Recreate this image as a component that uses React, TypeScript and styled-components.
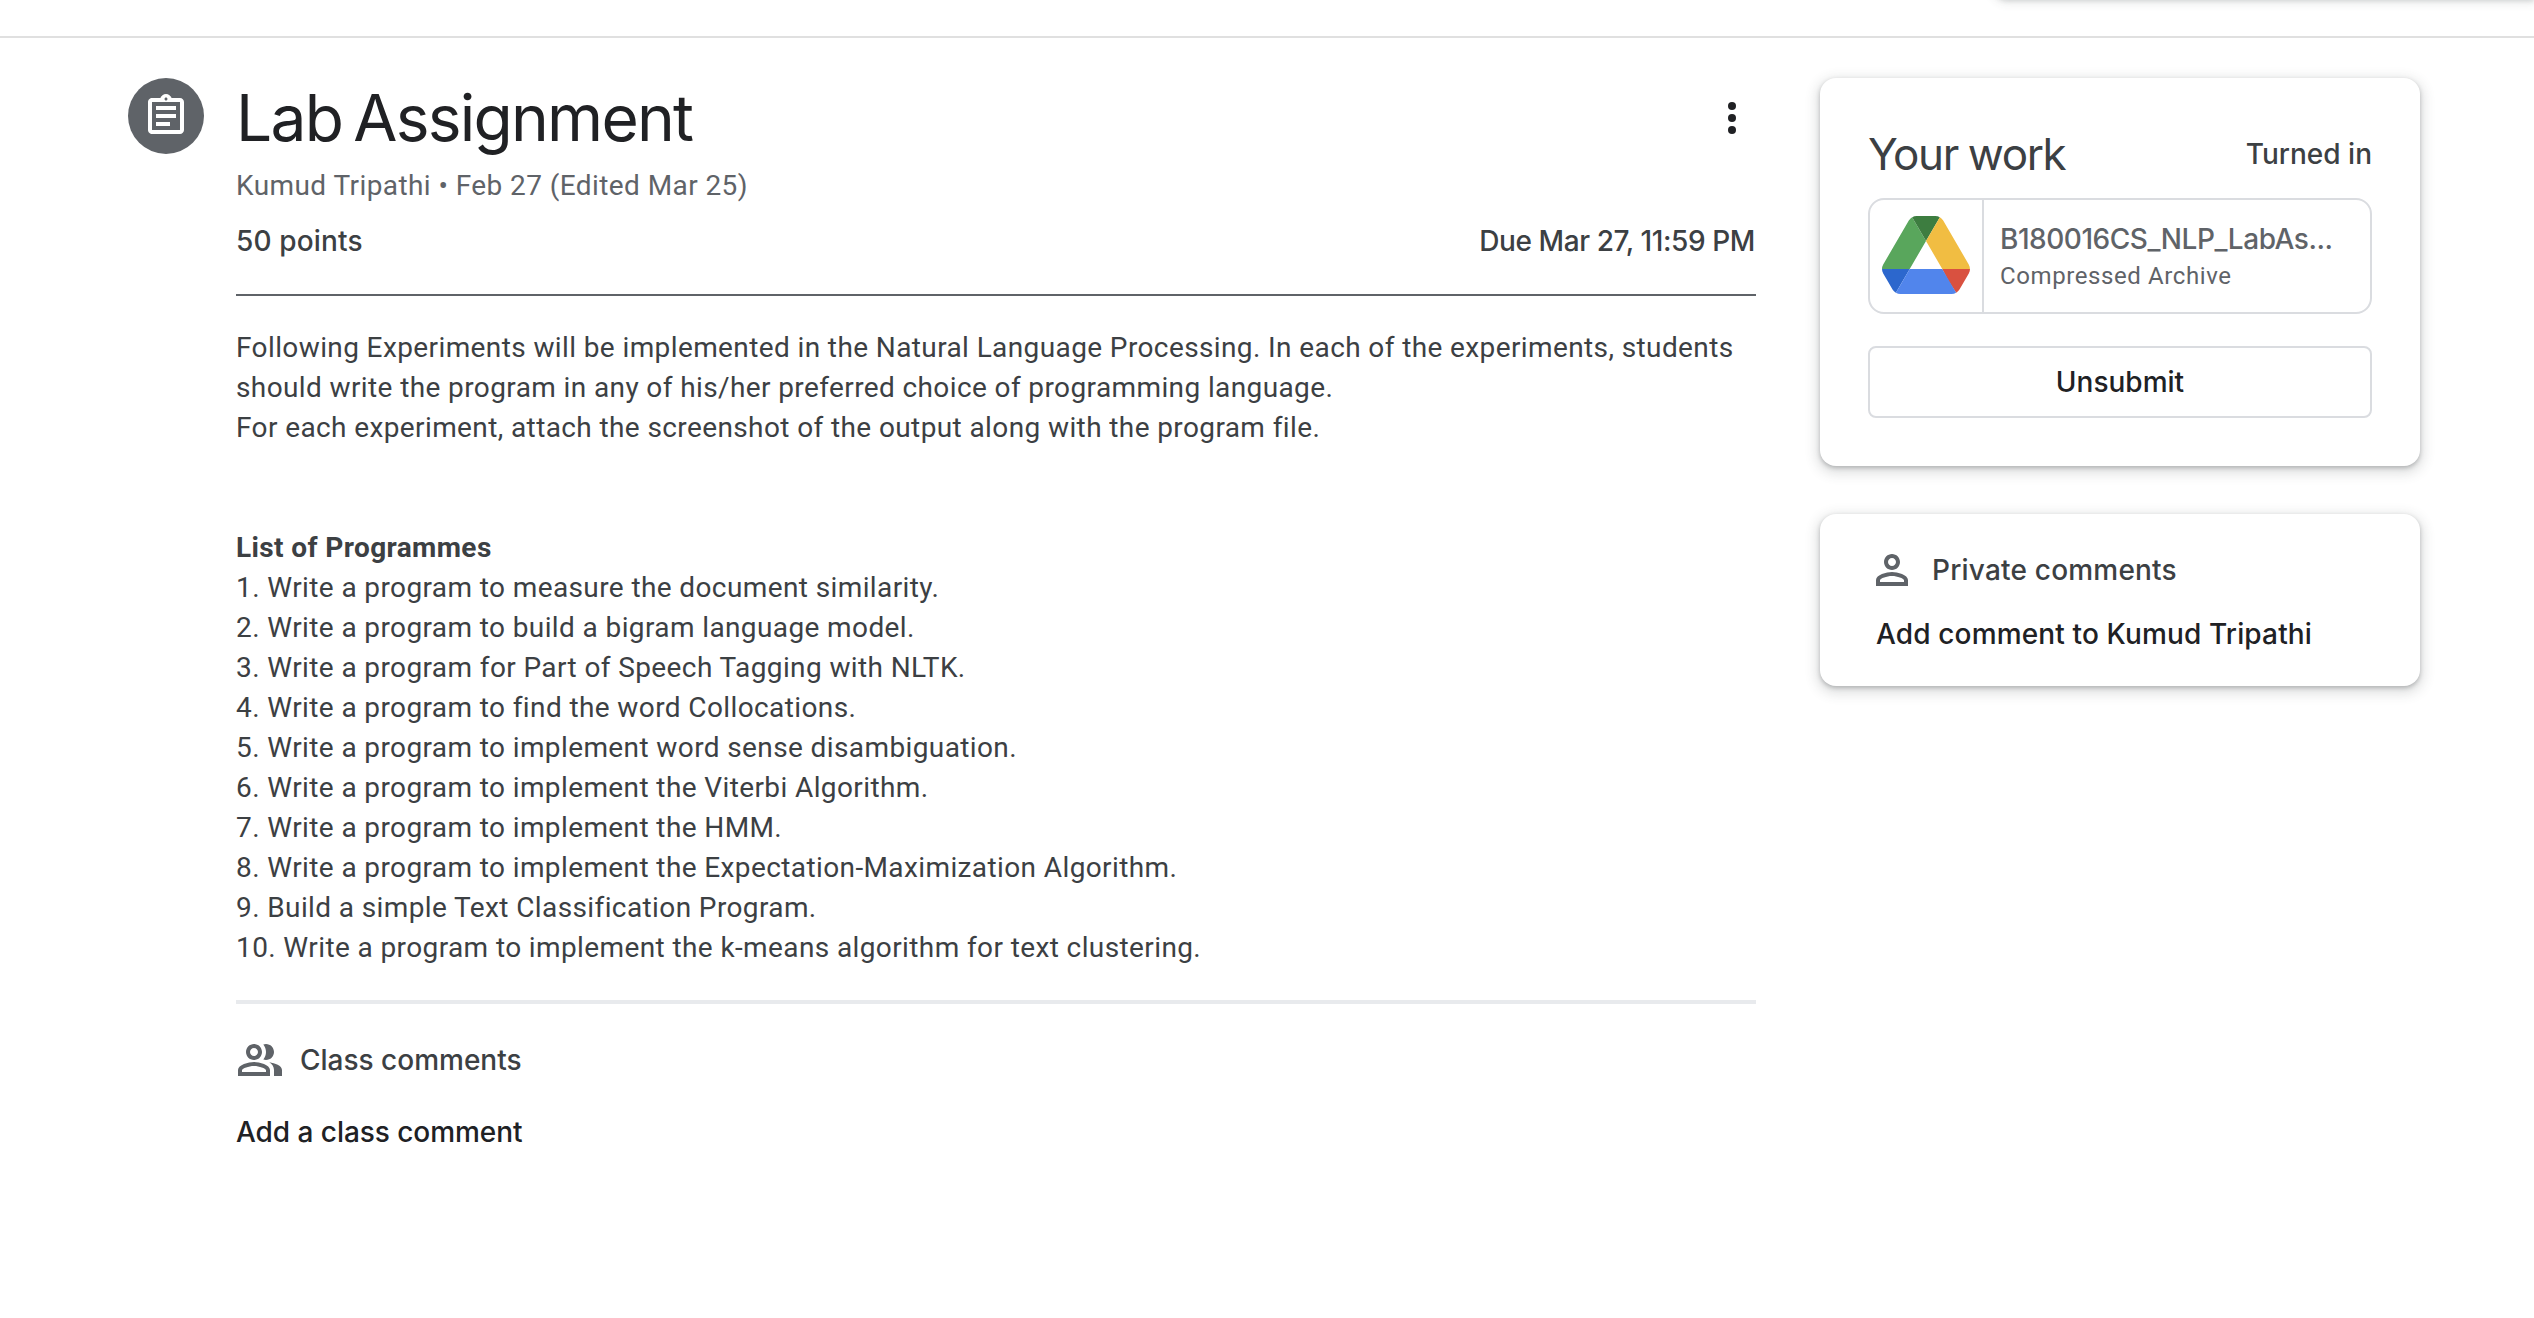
import React from "react";
import styled, { createGlobalStyle } from "styled-components";

const GlobalStyle = createGlobalStyle`
  * { box-sizing: border-box; }
  body { margin: 0; background: #fff; }
`;

const display = `"Google Sans", Inter, Roboto, sans-serif`;
const text = `Roboto, "Liberation Sans", sans-serif`;

const Page = styled.div`
  height: 1318px;
  overflow: hidden;
  background: #fff;
  color: #3c4043;
  font-family: ${text};
`;
const TopBar = styled.header`
  height: 38px;
  border-bottom: 2px solid #e0e0e0;
  display: flex;
  justify-content: flex-end;
  align-items: flex-start;
  overflow: hidden;
`;
const Popover = styled.div`
  width: 542px;
  height: 20px;
  margin-top: -21px;
  border-radius: 0 0 0 16px;
  background: #fff;
  box-shadow: 0 2px 4px rgba(60, 64, 67, 0.14), 0 2px 10px 2px rgba(60, 64, 67, 0.12);
`;
const Content = styled.div`
  display: flex;
  align-items: flex-start;
  padding: 40px 114px 0 128px;
`;
const Badge = styled.div`
  width: 76px;
  height: 76px;
  margin-right: 32px;
  flex: none;
  border-radius: 50%;
  background: #5f6368;
  display: flex;
  align-items: center;
  justify-content: center;
`;
const Icon = styled.svg<{ $color: string }>`
  width: 48px;
  height: 48px;
  flex: none;
  display: block;
  fill: ${(p) => p.$color};
`;
const Main = styled.main`
  width: 1520px;
  flex: none;
`;
const TitleRow = styled.div`
  display: flex;
  justify-content: space-between;
  align-items: center;
  height: 80px;
`;
const Title = styled.h1`
  margin: 0;
  font: 400 64px/80px ${display};
  letter-spacing: -1.75px;
  word-spacing: -5px;
  color: #202124;
`;
const Meta = styled.div`
  margin-top: 8px;
  font: 400 28px/40px ${text};
  letter-spacing: 0.42px;
  color: #5f6368;
`;
const Label = styled.span<{ $spacing?: number; $color?: string }>`
  font: 500 28px/40px ${display};
  letter-spacing: ${(p) => p.$spacing ?? 0}px;
  color: ${(p) => p.$color ?? "#3c4043"};
  white-space: nowrap;
`;
const Facts = styled.div`
  display: flex;
  justify-content: space-between;
  height: 75px;
  margin-top: 15px;
  padding-right: 1px;
  border-bottom: 2px solid #5f6368;
`;
const Description = styled.div`
  margin-top: 32px;
  height: 676px;
  border-bottom: 4px solid #e8eaed;
  font: 400 28px/40px ${text};
  letter-spacing: 0.39px;
  color: #3c4043;
  white-space: pre-line;
`;
const CommentsHead = styled.div<{ $gap: number }>`
  display: flex;
  align-items: center;
  gap: ${(p) => p.$gap}px;
`;
const ClassComments = styled.section`
  display: flex;
  flex-direction: column;
  gap: 28px;
  padding-top: 32px;
`;
const Aside = styled.aside`
  width: 600px;
  margin-left: 64px;
  flex: none;
  display: flex;
  flex-direction: column;
  gap: 48px;
`;
const Card = styled.section`
  border-radius: 16px;
  background: #fff;
  box-shadow: 0 2px 4px rgba(60, 64, 67, 0.3), 0 4px 12px 4px rgba(60, 64, 67, 0.15);
`;
const WorkCard = styled(Card)`
  height: 388px;
  padding: 48px;
`;
const PrivateCard = styled(Card)`
  height: 172px;
  padding: 32px 48px;
  display: flex;
  flex-direction: column;
  gap: 20px;
`;
const Indent = styled.div`
  padding-left: 8px;
  display: flex;
`;
const WorkHead = styled.div`
  display: flex;
  justify-content: space-between;
  align-items: center;
  height: 56px;
  margin-bottom: 16px;
`;
const WorkTitle = styled.h2`
  margin: 0;
  font: 400 44px/56px ${display};
  letter-spacing: -1.4px;
  word-spacing: -1px;
`;
const Attachment = styled.div`
  display: flex;
  height: 116px;
  border: 2px solid #dadce0;
  border-radius: 16px;
  overflow: hidden;
`;
const Thumb = styled.div`
  width: 114px;
  flex: none;
  padding-bottom: 2px;
  border-right: 2px solid #dadce0;
  display: flex;
  align-items: center;
  justify-content: center;
`;
const FileInfo = styled.div`
  padding: 19px 0 0 16px;
  display: flex;
  flex-direction: column;
  gap: 1px;
`;
const FileType = styled.span`
  font: 400 24px/32px ${text};
  letter-spacing: 0.6px;
  color: #5f6368;
`;
const Button = styled.button`
  width: 100%;
  height: 72px;
  margin-top: 32px;
  padding: 0;
  border: 2px solid #dadce0;
  border-radius: 8px;
  background: #fff;
`;

const programmes = [
  "Write a program to measure the document similarity.",
  "Write a program to build a bigram language model.",
  "Write a program for Part of Speech Tagging with NLTK.",
  "Write a program to find the word Collocations.",
  "Write a program to implement word sense disambiguation.",
  "Write a program to implement the Viterbi Algorithm.",
  "Write a program to implement the HMM.",
  "Write a program to implement the Expectation-Maximization Algorithm.",
  "Build a simple Text Classification Program.",
  "Write a program to implement the k-means algorithm for text clustering.",
];

const DriveLogo = () => (
  <svg width="88" height="78" viewBox="0 0 87.3 78" preserveAspectRatio="none">
    <path d="m6.6 66.85 3.85 6.65c.8 1.4 1.95 2.5 3.3 3.3l13.75-23.8h-27.5c0 1.55.4 3.1 1.2 4.5z" fill="#2c67cd" />
    <path d="m43.65 25-13.75-23.8c-1.35.8-2.5 1.9-3.3 3.3l-25.4 44a9.06 9.06 0 0 0 -1.2 4.5h27.5z" fill="#59a65c" />
    <path d="m73.55 76.8c1.35-.8 2.5-1.9 3.3-3.3l1.6-2.75 7.65-13.25c.8-1.4 1.2-2.95 1.2-4.5h-27.502l5.852 11.5z" fill="#d95140" />
    <path d="m43.65 25 13.75-23.8c-1.35-.8-2.9-1.2-4.5-1.2h-18.5c-1.6 0-3.15.45-4.5 1.2z" fill="#3d7d40" />
    <path d="m59.8 53h-32.3l-13.75 23.8c1.35.8 2.9 1.2 4.5 1.2h50.8c1.6 0 3.15-.45 4.5-1.2z" fill="#5185ec" />
    <path d="m73.4 26.5-12.7-22c-.8-1.4-1.95-2.5-3.3-3.3l-13.75 23.8 16.15 28h27.45c0-1.55-.4-3.1-1.2-4.5z" fill="#f1bd42" />
  </svg>
);

export default function App() {
  return (
    <Page>
      <GlobalStyle />
      <TopBar>
        <Popover />
      </TopBar>
      <Content>
        <Badge>
          <Icon viewBox="0 0 24 24" $color="#fff">
            <path d="M7 15h7v2H7zm0-4h10v2H7zm0-4h10v2H7z" />
            <path d="M19 3h-4.18C14.4 1.84 13.3 1 12 1s-2.4.84-2.82 2H5c-.14 0-.27.01-.4.04-.39.08-.74.28-1.01.55-.18.18-.33.4-.43.64-.1.23-.16.49-.16.77v14c0 .27.06.54.16.78.1.24.25.45.43.64.27.27.62.47 1.01.55.13.02.26.03.4.03h14c1.1 0 2-.9 2-2V5c0-1.1-.9-2-2-2zm-7-.25c.41 0 .75.34.75.75s-.34.75-.75.75-.75-.34-.75-.75.34-.75.75-.75zM19 19H5V5h14v14z" />
          </Icon>
        </Badge>
        <Main>
          <TitleRow>
            <Title>Lab Assignment</Title>
            <Icon viewBox="0 0 24 24" $color="#202124">
              <circle cx="12" cy="6" r="2" />
              <circle cx="12" cy="12" r="2" />
              <circle cx="12" cy="18" r="2" />
            </Icon>
          </TitleRow>
          <Meta>Kumud Tripathi • Feb 27 (Edited Mar 25)</Meta>
          <Facts>
            <Label $spacing={0.15}>50 points</Label>
            <Label $spacing={-0.4}>Due Mar 27, 11:59 PM</Label>
          </Facts>
          <Description>
            Following Experiments will be implemented in the Natural Language Processing. In each of the experiments, students should write the program in any of his/her preferred choice of programming language.
            {"\nFor each experiment, attach the screenshot of the output along with the program file.\n\n\n"}
            <b>List of Programmes</b>
            {programmes.map((p, i) => `\n${i + 1}. ${p}`).join("")}
          </Description>
          <ClassComments>
            <CommentsHead $gap={16}>
              <Icon viewBox="0 0 24 24" $color="#5f6368">
                <path d="M16.67 13.13C18.04 14.06 19 15.32 19 17v3h4v-3c0-2.18-3.57-3.47-6.33-3.87zM15 12c2.21 0 4-1.79 4-4s-1.79-4-4-4c-.47 0-.91.1-1.33.24C14.5 5.27 15 6.58 15 8s-.5 2.73-1.33 3.76c.42.14.86.24 1.33.24zM9 12c2.21 0 4-1.79 4-4s-1.79-4-4-4-4 1.79-4 4 1.79 4 4 4zm0-6c1.1 0 2 .9 2 2s-.9 2-2 2-2-.9-2-2 .9-2 2-2zM9 13c-2.67 0-8 1.34-8 4v3h16v-3c0-2.66-5.33-4-8-4zm6 5H3v-.99C3.2 16.29 6.3 15 9 15s5.8 1.29 6 2v1z" />
              </Icon>
              <Label>Class comments</Label>
            </CommentsHead>
            <Label $color="#202124" $spacing={-0.05}>Add a class comment</Label>
          </ClassComments>
        </Main>
        <Aside>
          <WorkCard>
            <WorkHead>
              <WorkTitle>Your work</WorkTitle>
              <Label>Turned in</Label>
            </WorkHead>
            <Attachment>
              <Thumb>
                <DriveLogo />
              </Thumb>
              <FileInfo>
                <Label $color="#5f6368" $spacing={-0.47}>B180016CS_NLP_LabAs...</Label>
                <FileType>Compressed Archive</FileType>
              </FileInfo>
            </Attachment>
            <Button>
              <Label $color="#202124" $spacing={0}>Unsubmit</Label>
            </Button>
          </WorkCard>
          <PrivateCard>
            <CommentsHead $gap={16}>
              <Icon viewBox="0 0 24 24" $color="#5f6368">
                <path d="M12 6c1.1 0 2 .9 2 2s-.9 2-2 2-2-.9-2-2 .9-2 2-2m0 9c2.7 0 5.8 1.29 6 2v1H6v-.99c.2-.72 3.3-2.01 6-2.01m0-11C9.79 4 8 5.79 8 8s1.79 4 4 4 4-1.79 4-4-1.79-4-4-4zm0 9c-2.67 0-8 1.34-8 4v3h16v-3c0-2.66-5.33-4-8-4z" />
              </Icon>
              <Label $spacing={0.2}>Private comments</Label>
            </CommentsHead>
            <Indent>
              <Label $color="#202124" $spacing={0.14}>Add comment to Kumud Tripathi</Label>
            </Indent>
          </PrivateCard>
        </Aside>
      </Content>
    </Page>
  );
}
